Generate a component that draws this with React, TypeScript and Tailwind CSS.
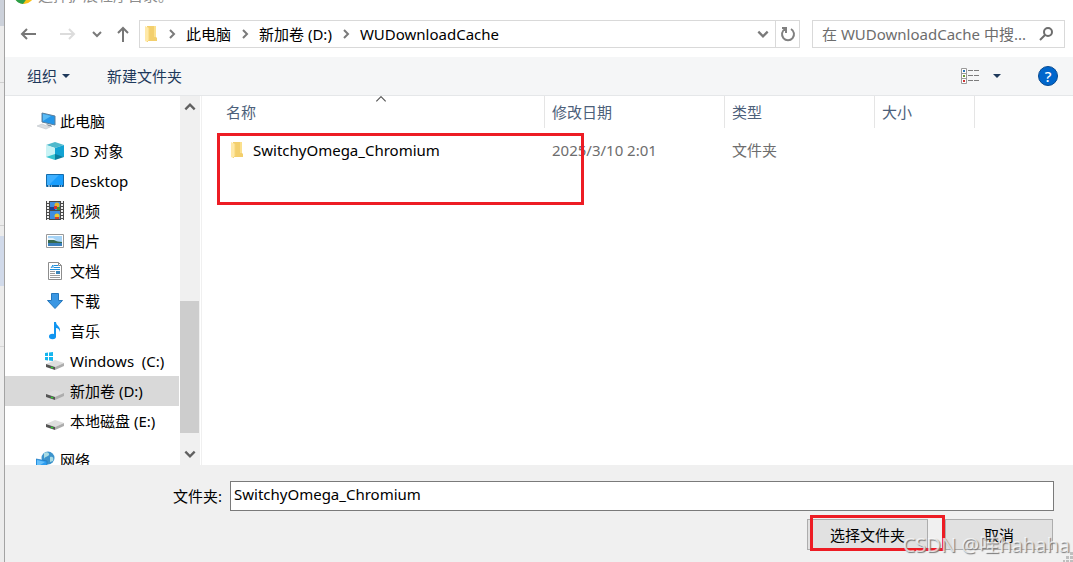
import type { ReactNode } from "react";

function Svg({ w, h, box, children, className }: { w: number; h: number; box?: string; children: ReactNode; className?: string }) {
  return (
    <svg width={w} height={h} viewBox={box ?? `0 0 ${w} ${h}`} fill="none" aria-hidden="true" className={`shrink-0 ${className ?? ""}`}>
      {children}
    </svg>
  );
}

function FolderIcon() {
  return (
    <Svg w={14} h={18}>
      <path d="M3 1h9v11l1 1v3H3z" fill="#f3cf6d" />
      <path d="M10 1h2v11h-2z" fill="#fbe08d" />
      <path d="M1 1l4 2v12l-2 2-2-1z" fill="#ffe9a8" />
      <path d="M5 3v12l-2 2" stroke="#f7d679" />
    </Svg>
  );
}

function PcIcon() {
  return (
    <Svg w={20} h={18}>
      <path d="M6 1l13 3v9l-13-3z" fill="#2596e8" stroke="#5d7f9b" />
      <path d="M7 2l8 2-8 5z" fill="#5cbcf5" />
      <path d="M10 12l5 1 1 2-4-1z" fill="#8b97a3" />
      <path d="M1 14l5-2 8 3-4 2z" fill="#d9dde1" stroke="#c0c5ca" strokeWidth=".6" />
    </Svg>
  );
}

function CubeIcon() {
  return (
    <Svg w={18} h={18}>
      <path d="M0 3l9-3 9 3-9 3z" fill="#4fb9cc" />
      <path d="M0 3l9 3v8l-9 1z" fill="#c9f3f5" />
      <path d="M18 3l-9 3v8l9 1z" fill="#12a3d3" />
      <path d="M0 15l9-3v6z" fill="#37c3cf" />
      <path d="M18 15l-9-3v6z" fill="#0a7fa0" />
    </Svg>
  );
}

function DesktopIcon() {
  return (
    <Svg w={18} h={14}>
      <path d="M.5.5h17v12H.5z" fill="#189dfc" stroke="#146cab" />
      <path d="M1 1h12L3 11H1z" fill="#3fb0ff" />
      <path d="M1 11h16v2H1z" fill="#0b5e9d" />
      <path d="M2 12h2M5 12h1M13 12h1M15 12h1" stroke="#fff" />
    </Svg>
  );
}

function VideoIcon() {
  return (
    <Svg w={18} h={20}>
      <path d="M0 0h18v19H0z" fill="#4a4a4a" />
      <path d="M2 0v19M16 0v19" stroke="#f2f2f2" strokeWidth="2" strokeDasharray="2 1" />
      <path d="M4 1h10v8H4zM4 10h10v8H4z" fill="#3f8ee0" />
      <path d="M4 6h5v3H4z" fill="#1f3f8f" />
      <circle cx="11" cy="4" r="2.5" fill="#e8b52a" />
      <path d="M8 5h3v3H8z" fill="#d62f2f" />
      <path d="M11 6h3v3h-3z" fill="#3b8f37" />
      <circle cx="11" cy="15" r="2.5" fill="#f0c92e" />
      <path d="M9 16h4v2H9z" fill="#d6402f" />
    </Svg>
  );
}

function PictureIcon() {
  return (
    <Svg w={18} h={14}>
      <path d="M.5.5h17v13H.5z" fill="#fff" stroke="#9a9a9a" />
      <path d="M2 2h14v10H2z" fill="#a5d3f6" />
      <path d="M2 5c4-1 7 3 14 3v2H2z" fill="#35694e" />
      <path d="M2 9h14v3H2z" fill="#3a7fbd" />
      <path d="M2 4h5l3 2H2z" fill="#e4f1fb" />
    </Svg>
  );
}

function DocIcon() {
  return (
    <Svg w={16} h={18}>
      <path d="M1.5.5h10l3 3v14h-13z" fill="#fff" stroke="#8d8d8d" />
      <path d="M11.500 .5v3h3" stroke="#8d8d8d" />
      <path d="M4 6l2-3v3M7 3.500h4M7 5.500h6M3 7.500h10" stroke="#1f8fdc" />
      <path d="M3 9.500h5M3 11.500h5M3 13.500h10M3 15.500h10" stroke="#9b9b9b" />
      <path d="M9 9h4v3H9z" fill="#3c84b8" />
    </Svg>
  );
}

function DownloadIcon() {
  return (
    <Svg w={18} h={18}>
      <path d="M5.500 1.500h7v7h4L9 16.500 1.500 8.500h4z" fill="#3b97e3" stroke="#2477bd" />
    </Svg>
  );
}

function MusicIcon() {
  return (
    <Svg w={14} h={18}>
      <ellipse cx="4.500" cy="14.500" rx="3.500" ry="2.700" fill="#1095f0" />
      <path d="M6 0h2c0 4 5 4 4 10-1-3-2-4-4-4v9H6z" fill="#1095f0" />
    </Svg>
  );
}

function DriveIcon({ system = false }: { system?: boolean }) {
  return (
    <Svg w={20} h={18}>
      {system && <path d="M0 1l3-.5V4H0zM4 .4L8 0v4H4zM0 5h3v3.500L0 8zM4 5h4v4l-4-.5z" fill="#15b5ee" />}
      <path d="M1 12l9-4 9 3-9 4z" fill="#dedede" />
      <path d="M1 12l9 3v3l-9-3z" fill="#555" />
      <path d="M10 15l9-4v3l-9 4z" fill="#adadad" />
      <path d="M6 15.200l2 .7" stroke="#35d435" strokeWidth="1.500" />
    </Svg>
  );
}

function NetworkIcon() {
  return (
    <Svg w={20} h={18}>
      <circle cx="12" cy="7" r="6.500" fill="#3c93cc" />
      <path d="M8 2c3-2 6 0 5 2s-4 1-5 4zM14 6c3-1 4 1 3 4l-3 1z" fill="#a9dbe4" />
      <path d="M0 8l11 2v8H0z" fill="#2d9df0" stroke="#1c77bd" strokeWidth=".7" />
      <path d="M1 9l8 2-8 5z" fill="#68c1fb" />
    </Svg>
  );
}

function Chevron({ dir, size = 12, color = "#7a7a7a", width = 2 }: { dir: "up" | "down" | "right"; size?: number; color?: string; width?: number }) {
  const d = { up: "M2 8l4-4 4 4", down: "M2 4l4 4 4-4", right: "M4 2l4 4-4 4" }[dir];
  return (
    <Svg w={size} h={size} box="0 0 12 12">
      <path d={d} stroke={color} strokeWidth={width} />
    </Svg>
  );
}

const places: { label: string; icon: ReactNode; selected?: boolean }[] = [
  { label: "3D 对象", icon: <CubeIcon /> },
  { label: "Desktop", icon: <DesktopIcon /> },
  { label: "视频", icon: <VideoIcon /> },
  { label: "图片", icon: <PictureIcon /> },
  { label: "文档", icon: <DocIcon /> },
  { label: "下载", icon: <DownloadIcon /> },
  { label: "音乐", icon: <MusicIcon /> },
  { label: "Windows  (C:)", icon: <DriveIcon system /> },
  { label: "新加卷 (D:)", icon: <DriveIcon />, selected: true },
  { label: "本地磁盘 (E:)", icon: <DriveIcon /> },
];

function TreeItem({ label, icon, root, selected }: { label: string; icon: ReactNode; root?: boolean; selected?: boolean }) {
  return (
    <button
      className={`flex h-[30px] w-full shrink-0 items-center whitespace-pre text-left ${root ? "gap-1 pl-[31px]" : "gap-[5px] pl-10"} ${selected ? "bg-[#d9d9d9]" : ""}`}
    >
      <span className="flex w-5 shrink-0 justify-center">{icon}</span>
      <span>{label}</span>
    </button>
  );
}

function Sidebar() {
  return (
    <nav aria-label="文件夹树" className="flex w-[197px] shrink-0 border-r border-[#f0f0f0]">
      <div className="flex min-w-0 flex-1 flex-col overflow-hidden pt-[10px]">
        <TreeItem label="此电脑" icon={<PcIcon />} root />
        {places.map((p) => (
          <TreeItem key={p.label} {...p} />
        ))}
        <div className="mt-[9px]">
          <TreeItem label="网络" icon={<NetworkIcon />} root />
        </div>
      </div>
      <div className="mr-px ml-px flex w-5 flex-col items-center bg-[#f0f0f0]">
        <button aria-label="向上滚动" className="flex h-[22px] items-center">
          <Chevron dir="up" size={14} color="#606060" />
        </button>
        <div className="flex-[183]" />
        <div className="w-full flex-[132] pr-px">
          <div className="h-full bg-[#cdcdcd]" />
        </div>
        <div className="flex-[10]" />
        <button aria-label="向下滚动" className="flex h-[22px] items-center">
          <Chevron dir="down" size={14} color="#606060" />
        </button>
      </div>
    </nav>
  );
}

function NavBar() {
  return (
    <div className="flex h-[28px] shrink-0 items-center pr-2">
      <div className="flex w-[134px] shrink-0 items-center pl-[15px]">
        <button aria-label="后退">
          <Svg w={18} h={16}>
            <path d="M2 8h14M7 3L2 8l5 5" stroke="#777" strokeWidth="2" />
          </Svg>
        </button>
        <button aria-label="前进" className="ml-[21px]">
          <Svg w={18} h={16}>
            <path d="M1 8h14M10 3l5 5-5 5" stroke="#dcdcdc" strokeWidth="2" />
          </Svg>
        </button>
        <button aria-label="最近位置" className="ml-[14px]">
          <Chevron dir="down" size={12} />
        </button>
        <button aria-label="上移" className="ml-[13px]">
          <Svg w={14} h={18}>
            <path d="M7 17V3M2 8l5-5 5 5" stroke="#777" strokeWidth="2" />
          </Svg>
        </button>
      </div>
      <div className="flex h-full min-w-0 flex-1 items-stretch border border-[#d9d9d9]">
        <div className="flex min-w-0 flex-1 items-center gap-2 pl-1">
          <FolderIcon />
          <Chevron dir="right" />
          <button>此电脑</button>
          <Chevron dir="right" />
          <button>新加卷 (D:)</button>
          <Chevron dir="right" />
          <button>WUDownloadCache</button>
        </div>
        <button aria-label="历史记录" className="flex w-6 items-center justify-center">
          <Chevron dir="down" size={14} />
        </button>
        <button aria-label="刷新" className="flex w-6 items-center justify-center border-l border-[#d9d9d9]">
          <Svg w={16} h={16}>
            <path d="M11 3a6 6 0 1 1-6 0M2 2h4v5" stroke="#808080" strokeWidth="2" />
          </Svg>
        </button>
      </div>
      <label className="ml-3 flex h-full w-[253px] shrink-0 items-center border border-[#d9d9d9] pr-[9px] pl-[9px]">
        <input
          aria-label="搜索"
          placeholder="在 WUDownloadCache 中搜..."
          className="min-w-0 flex-1 bg-transparent outline-none placeholder:text-[#6d6d6d]"
        />
        <Svg w={18} h={16}>
          <circle cx="11" cy="6" r="4" stroke="#6d6d6d" strokeWidth="2" />
          <path d="M8 9l-5 5" stroke="#6d6d6d" strokeWidth="2" />
        </Svg>
      </label>
    </div>
  );
}

function Toolbar() {
  return (
    <div className="mt-[9px] flex h-[39px] shrink-0 items-center border-b border-[#e5e7e9] bg-[#f5f6f7] pr-[15px] pl-[22px] text-[#1e395b]">
      <button className="flex items-center gap-[5px]">
        组织
        <Svg w={8} h={4}>
          <path d="M0 0h8L4 4z" fill="#1e395b" />
        </Svg>
      </button>
      <button className="ml-[37px]">新建文件夹</button>
      <button aria-label="更改视图" className="ml-auto">
        <Svg w={18} h={16}>
          <path d="M.5.5h5v15h-5zM.5 5.500h5M.5 10.500h5" stroke="#9a9a9a" fill="#fff" />
          <path d="M2 2h2v2H2z" fill="#2c78b8" />
          <path d="M2 7h2v2H2z" fill="#6a9a35" />
          <path d="M2 12h2v2H2z" fill="#cf3232" />
          <path d="M7 2.500h5M13 2.500h5M7 7.500h5M13 7.500h5M7 12.500h5M13 12.500h5" stroke="#7c7c7c" />
        </Svg>
      </button>
      <button aria-label="更多选项" className="ml-[14px]">
        <Svg w={8} h={4}>
          <path d="M0 0h8L4 4z" fill="#1e395b" />
        </Svg>
      </button>
      <button
        aria-label="帮助"
        className="ml-[37px] flex size-5 items-center justify-center rounded-full border border-[#084a91] bg-[#0066cc] text-[15px] leading-none font-medium text-white"
      >
        ?
      </button>
    </div>
  );
}

function FileList() {
  const th = "h-8 border-r border-[#e5e5e5] pl-[7px] text-left align-middle font-normal";
  return (
    <main className="relative min-w-0 flex-1">
      <table className="table-fixed border-separate border-spacing-0">
        <colgroup>
          <col className="w-[343px]" />
          <col className="w-[180px]" />
          <col className="w-[150px]" />
          <col className="w-[100px]" />
        </colgroup>
        <thead className="text-[#4c607a]">
          <tr>
            <th className="relative h-8 border-r border-[#e5e5e5] pl-6 text-left font-normal">
              名称
              <span className="absolute -top-1 left-[172px]">
                <Chevron dir="up" size={14} color="#555" width={1} />
              </span>
            </th>
            <th className={th}>修改日期</th>
            <th className={th}>类型</th>
            <th className={th}>大小</th>
          </tr>
        </thead>
        <tbody className="text-[#6d6d6d]">
          <tr>
            <td className="h-[44px] pl-7">
              <span className="flex items-center gap-[9px] text-black">
                <FolderIcon />
                SwitchyOmega_Chromium
              </span>
            </td>
            <td className="pl-[7px]">2025/3/10 2:01</td>
            <td className="pl-[7px]">文件夹</td>
            <td />
          </tr>
        </tbody>
      </table>
      <div className="absolute top-[37px] left-[15px] h-[72px] w-[367px] border-[3px] border-[#ed1c24]" />
    </main>
  );
}

function Footer() {
  return (
    <footer className="relative flex h-[97px] shrink-0 flex-col bg-[#f0f0f0] pt-4">
      <div className="flex items-center pr-[19px]">
        <label htmlFor="folder" className="w-[217px] shrink-0 text-right">
          文件夹:
        </label>
        <input
          id="folder"
          defaultValue="SwitchyOmega_Chromium"
          className="ml-2 h-[30px] min-w-0 flex-1 border border-[#7a7a7a] bg-white px-[3px] pb-1 outline-none"
        />
      </div>
      <div className="mt-2 flex justify-end gap-[17px] pr-5">
        <div className="relative">
          <button className="h-[31px] w-[121px] border border-[#adadad] bg-[#e1e1e1]">选择文件夹</button>
          <div className="absolute -top-1 left-[3px] h-9 w-[135px] border-[3px] border-[#ed1c24]" />
        </div>
        <button className="h-[31px] w-[108px] border border-[#adadad] bg-[#e1e1e1]">取消</button>
      </div>
      <span className="absolute right-[3px] bottom-[3px] text-[20px] leading-7 whitespace-nowrap text-white/70 [text-shadow:1px_1px_1px_#777]">
        CSDN @哇hahaha
      </span>
      <Svg w={10} h={10} className="absolute right-0 bottom-0">
        <path d="M7 0h3v3H7zM3 4h3v3H3zM7 4h3v3H7zM0 8h2v2H0zM3 8h3v2H3zM7 8h3v2H7z" fill="#bfbfbf" />
      </Svg>
    </footer>
  );
}

export default function App() {
  return (
    <div className="flex h-screen overflow-hidden bg-white font-['Noto_Sans','Noto_Sans_CJK_SC',sans-serif] text-[15px] leading-5 text-black">
      <div className="flex w-[5px] shrink-0 flex-col border-r border-[#a3a3a3] bg-[#ececec]">
        <div className="h-[26px] bg-[#ccd1da]" />
        <div className="h-[57px] border-b border-[#cfcfcf]" />
        <div className="h-[143px] border-b border-[#cfcfcf]" />
        <div className="mt-[10px] h-[50px] bg-[#d1daea]" />
        <div className="h-[61px] border-b border-[#d6d6d6]" />
      </div>
      <div className="flex min-w-0 flex-1 flex-col">
        <header className="flex h-5 shrink-0 items-start gap-1 overflow-hidden pl-[9px] text-[#8c8c8c]">
          <Svg w={20} h={20} className="-mt-4">
            <circle cx="10" cy="10" r="10" fill="#fbc116" />
            <path d="M10 10L1 5a10 10 0 0 0 8 15l5-7z" fill="#2b9f48" />
            <path d="M1 5a10 10 0 0 1 18 0h-9z" fill="#e33b2e" />
            <circle cx="10" cy="10" r="4" fill="#3b78e7" stroke="#fff" />
          </Svg>
          <span className="-mt-[15px]">选择扩展程序目录。</span>
        </header>
        <NavBar />
        <Toolbar />
        <div className="flex min-h-0 flex-1 overflow-hidden">
          <Sidebar />
          <FileList />
        </div>
        <Footer />
      </div>
    </div>
  );
}
